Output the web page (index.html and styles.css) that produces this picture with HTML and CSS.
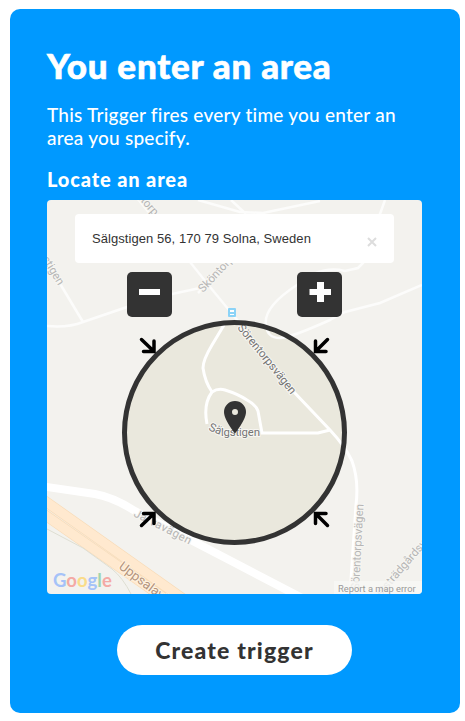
FILE: index.html
```html
<!DOCTYPE html>
<html lang="en">
<head>
<meta charset="utf-8">
<title>Create trigger</title>
<link rel="stylesheet" href="styles.css">
</head>
<body>
<main class="card">
  <h1 class="title">You enter an area</h1>
  <p class="description">This Trigger fires every time you enter an<br>area you specify.</p>
  <h2 class="label">Locate an area</h2>
  <section class="map">
    <svg class="map-canvas" viewBox="47 200 375 394" width="375" height="394">
      <rect x="47" y="200" width="375" height="394" fill="#f3f2ee"/>
      <circle cx="234.5" cy="432.5" r="110" fill="#eae8dd"/>
      <g class="minor-roads">
        <path d="M47 326Q68 328 83 322L127 307Q142 299 172 294L200 288"/>
        <path d="M47 262L83 322"/>
        <path d="M128 187L190 262L210 287L238 321"/>
        <path d="M198 200L240 212L263 213L320 201M231 200L246 214"/>
        <path d="M385 200L380 214L363 263L358 268L345 271Q320 265 297 285Q263 307 266 325Q267 338 280 338Q290 338 330 320L345 312L380 303L422 285"/>
        <path d="M198 293L240 252"/>
      </g>
      <g class="roads">
        <path d="M224 325L212 345Q203 360 203 368Q205 382 212 392M207 424Q203 404 212 392Q218 388 225 390Q238 394 247 400Q256 405 258 411L262 433L318 433L330 430"/>
        <path d="M236 321L293 391L330 430Q345 446 352 461Q359 480 356 505L350 594"/>
      </g>
      <path class="avenue" d="M40 486L95 494Q113 497 135 511L235 563L304 599"/>
      <g class="highway">
        <path class="highway-edge" d="M33 492.500L189 603M33 506.500L171 603"/>
        <path class="highway-fill" d="M33 492.500L189 603M33 506.500L171 603"/>
      </g>
      <path class="rail" d="M47 529L83 548L112 569Q123 578 131 594"/>
      <g class="street dim">
        <text transform="translate(136 196) rotate(49)">ntorp</text>
        <text transform="translate(42 259) rotate(59)">stigen</text>
        <text transform="translate(203 293) rotate(-47)">Sköntorpsv</text>
        <text transform="translate(133 516) rotate(27)" textLength="63">Järvavägen</text>
        <text transform="translate(359 590) rotate(-87)" textLength="86">Sörentorpsvägen</text>
        <text transform="translate(381 597) rotate(-49)">ststrädgårdsv</text>
      </g>
      <text class="street town" transform="translate(118 568) rotate(37)">Uppsalavägen</text>
      <g class="street">
        <text transform="translate(237 328) rotate(51)" textLength="86">Sörentorpsvägen</text>
        <text transform="translate(208 430) rotate(22)">Sä</text>
        <text x="221" y="436" textLength="39">lgstigen</text>
      </g>
      <g>
        <rect x="228" y="308" width="8" height="9" rx="1" fill="#8bd3f7"/>
        <path d="M230 310h4v2h-4zM230 314h4v1h-4z" fill="#fff"/>
      </g>
      <circle cx="234.5" cy="432.5" r="110" fill="none" stroke="#333" stroke-width="5"/>
      <path fill="#333" fill-rule="evenodd" d="M235 401a11 11 0 0 0-11 11C224 420 235 433.500 235 433.500S246 420 246 412A11 11 0 0 0 235 401zM235 409a3 3 0 1 1 0 6a3 3 0 0 1 0-6z"/>
      <g class="arrows">
        <path d="M141.500 339.500L154 351.500M154 341V351.500H143.500"/>
        <path d="M327.500 339.500L315.500 351.500M315.500 341V351.500H326"/>
        <path d="M141.500 525.500L154 513.500M154 523.500V513.500H143.500"/>
        <path d="M327.500 525.500L315.500 513.500M315.500 523.500V513.500H326"/>
      </g>
      <text class="brand" x="53" y="587"><tspan fill="#a5c2f8">G</tspan><tspan fill="#f4aaa5">o</tspan><tspan fill="#fadc8a">o</tspan><tspan fill="#a5c2f8">g</tspan><tspan fill="#a0d5ae">l</tspan><tspan fill="#f4aaa5">e</tspan></text>
    </svg>
    <div class="controls">
      <div class="search">
        <span>Sälgstigen 56, 170 79 Solna, Sweden</span>
        <svg class="clear" width="10" height="10" viewBox="0 0 10 10"><path d="M1 1L9 9M9 1L1 9"/></svg>
      </div>
      <div class="zoom">
        <button class="zoom-button" aria-label="Zoom out"><svg width="45" height="45"><path d="M12 17h21v6H12z"/></svg></button>
        <button class="zoom-button" aria-label="Zoom in"><svg width="45" height="45"><path d="M12.500 17h7.500v-7h7v7h7v6h-7v7h-7v-7h-7.500z"/></svg></button>
      </div>
    </div>
    <a class="report">Report a map error</a>
  </section>
  <button class="create">Create trigger</button>
</main>
</body>
</html>
```

FILE: styles.css
```css
* { box-sizing: border-box; }
body { margin: 0; background: #fff; font-family: Lato, sans-serif; }
.card {
  width: 450px;
  height: 704px;
  margin: 9px 0 0 10px;
  padding: 35px 37px 0;
  border-radius: 10px;
  background: #0099ff;
  color: #fff;
}
.title { margin: 0; font-size: 35px; line-height: 42px; font-weight: 900; letter-spacing: .75px; white-space: nowrap; -webkit-text-stroke: .6px #fff; }
.description { margin: 17px 0 0; font-size: 19px; line-height: 23px; font-weight: 500; letter-spacing: .24px; white-space: nowrap; }
.label { margin: 17px 0 0; font-size: 20px; line-height: 26px; font-weight: 900; letter-spacing: .85px; height: 34px; white-space: nowrap; }
.map { position: relative; width: 375px; height: 394px; border-radius: 4px; overflow: hidden; }
.map-canvas { display: block; }
.minor-roads { fill: none; stroke: #fcfcfb; stroke-width: 2.5; }
.roads { fill: none; stroke: #fff; stroke-width: 3; }
.avenue { fill: none; stroke: #fff; stroke-width: 8; }
.highway { fill: none; }
.highway-edge { stroke: #f8dcb9; stroke-width: 10.6; }
.highway-fill { stroke: #ffe9cf; stroke-width: 9.2; }
.rail { fill: none; stroke: #deded2; stroke-width: 1; }
.street { font: 11.5px Roboto, sans-serif; fill: #747474; stroke: #f7f6f2; stroke-width: 2px; paint-order: stroke; }
.dim { fill: #b5b5b5; }
.town { font-size: 13px; fill: #b3937c; stroke: #fff2df; }
.brand { font: 700 18.5px Lato, sans-serif; }
.arrows { fill: none; stroke: #000; stroke-width: 3.5; stroke-linecap: round; }
.controls { position: absolute; left: 28px; top: 14px; width: 319px; }
.search {
  display: flex;
  align-items: center;
  justify-content: space-between;
  height: 49px;
  padding: 0 17px;
  border-radius: 4px;
  background: #fff;
  color: #333;
  font: 13px "Liberation Sans", Arial, sans-serif;
  letter-spacing: .06px;
}
.clear { margin-top: 7px; fill: none; stroke: #ddd; stroke-width: 2; }
.zoom { display: flex; justify-content: space-between; padding: 9px 52px 0; }
.zoom-button { width: 45px; height: 45px; padding: 0; border: 0; border-radius: 5px; background: #333; }
.zoom-button svg { display: block; fill: #fff; }
.report {
  position: absolute;
  right: 0;
  bottom: 0;
  width: 88px;
  height: 13px;
  padding-left: 4px;
  background: rgba(247, 247, 245, .8);
  color: #999;
  font: 9.3px/16px Roboto, sans-serif;
  white-space: nowrap;
}
.create {
  display: block;
  width: 235px;
  height: 50px;
  margin: 31px 0 0 70px;
  padding: 0;
  border: 0;
  border-radius: 25px;
  background: #fff;
  color: #333;
  font: 900 23px Lato, sans-serif;
  letter-spacing: 1.15px;
}
```
